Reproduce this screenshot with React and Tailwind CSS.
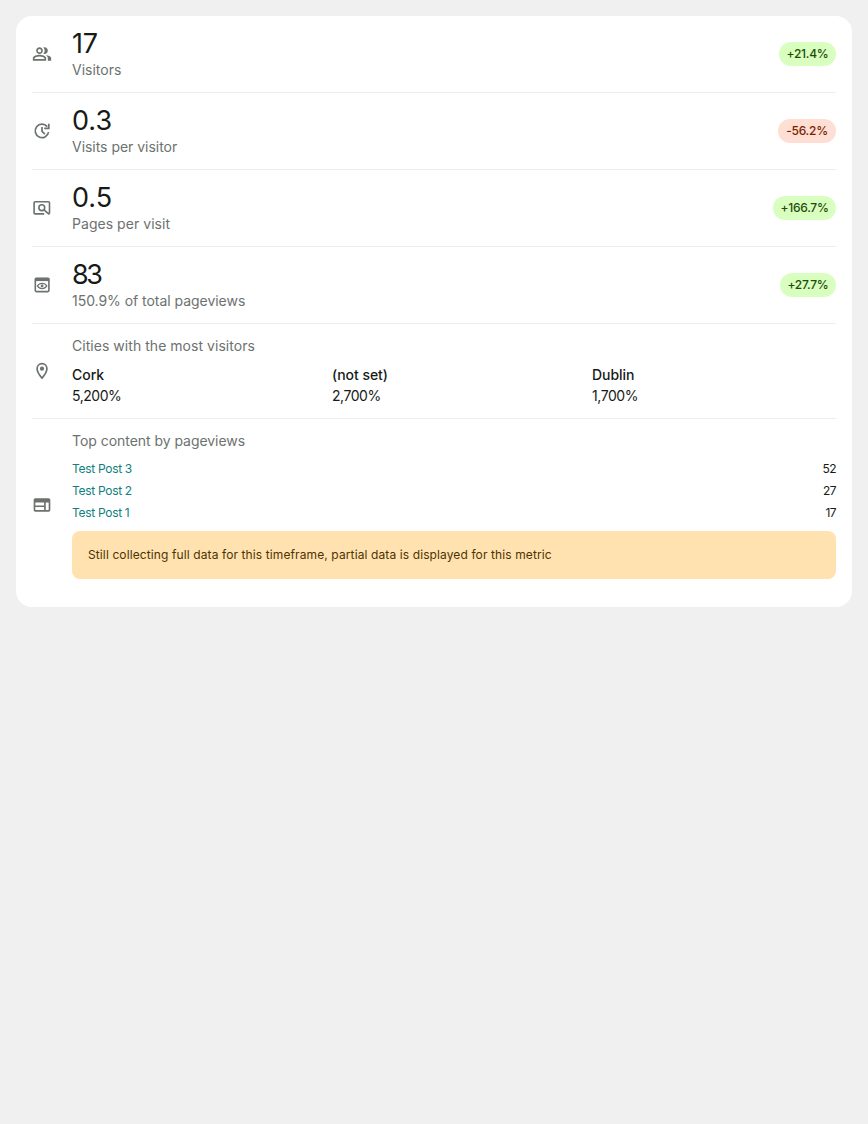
import { MdOutlinePeopleAlt, MdOutlineWeb } from "react-icons/md";

function VisitsIcon({ className }) {
  return (
    <svg viewBox="0 0 20 20" fill="none" stroke="currentColor" strokeWidth="1.7" className={className}>
      <path d="M16.6 11.2A6.75 6.75 0 1 1 15.2 5.6" />
      <path d="M16.8 2.8v4.6h-4.6" />
      <path d="M10 6.1v4.2l2.9 2.9" />
    </svg>
  );
}

function PageSearchIcon({ className }) {
  return (
    <svg viewBox="0 0 20 20" fill="none" stroke="currentColor" strokeWidth="1.6" className={className}>
      <path d="M12.2 15.9H3.1a1 1 0 0 1-1-1V4.8a1 1 0 0 1 1-1h13.4a1 1 0 0 1 1 1v10.1a1 1 0 0 1-.9 1L12 11.9" />
      <circle cx="9.8" cy="9.7" r="2.9" />
    </svg>
  );
}

function PreviewIcon({ className }) {
  return (
    <svg viewBox="0 0 20 20" fill="none" stroke="currentColor" className={className}>
      <rect x="3.3" y="3.3" width="13.6" height="13.3" rx="1" strokeWidth="1.6" />
      <path d="M3 4.5h14.2" strokeWidth="3.2" />
      <path d="M5.4 10.9c2.1-3.5 7.3-3.5 9.4 0-2.1 3.5-7.3 3.5-9.4 0Z" strokeWidth="1.2" />
      <circle cx="10.1" cy="10.9" r="1.35" fill="currentColor" stroke="none" />
    </svg>
  );
}

function PinIcon({ className }) {
  return (
    <svg viewBox="0 0 20 20" fill="none" stroke="currentColor" strokeWidth="1.7" className={className}>
      <path d="M10 17.1C6.6 13.4 5.1 10.4 5.1 7.6a4.9 5 0 0 1 9.8 0c0 2.8-1.5 5.8-4.9 9.5Z" />
      <circle cx="10" cy="7.7" r="2.1" fill="currentColor" stroke="none" />
    </svg>
  );
}

const metrics = [
  { Icon: MdOutlinePeopleAlt, value: "17", label: "Visitors", change: "+21.4%", up: true, badge: "w-[57px]", num: "tracking-[-0.3px]", text: "tracking-[0px]" },
  { Icon: VisitsIcon, value: "0.3", label: "Visits per visitor", change: "-56.2%", up: false, badge: "w-[58px]", num: "tracking-[0px]", text: "tracking-[-0.03px]" },
  { Icon: PageSearchIcon, value: "0.5", label: "Pages per visit", change: "+166.7%", up: true, badge: "w-[63px]", num: "tracking-[0px]", text: "tracking-[0.04px]" },
  { Icon: PreviewIcon, value: "83", label: "150.9% of total pageviews", change: "+27.7%", up: true, badge: "w-[56px]", num: "tracking-[-2.5px]", text: "tracking-[-0.04px]" },
];

const cities = [
  { name: "Cork", share: "5,200%" },
  { name: "(not set)", share: "2,700%" },
  { name: "Dublin", share: "1,700%" },
];

const posts = [
  { title: "Test Post 3", views: "52" },
  { title: "Test Post 2", views: "27" },
  { title: "Test Post 1", views: "17" },
];

function IconCell({ Icon }) {
  return (
    <div className="flex w-10 shrink-0 items-center">
      <Icon className="size-5 text-[#6c726e]" />
    </div>
  );
}

export default function App() {
  return (
    <div className="min-h-screen bg-[#f0f0f1] p-4 font-['Inter','Roboto',sans-serif] text-[#161b18]">
      <div className="rounded-2xl bg-white px-4 pb-4">
        {metrics.map((m) => (
          <div key={m.label} className="flex h-[77px] border-b border-[#ebeef0]">
            <IconCell Icon={m.Icon} />
            <div className="flex-1 pt-2.5">
              <div className={`text-[27px] leading-9 ${m.num}`}>{m.value}</div>
              <div className={`text-[14px] leading-4 text-[#6c726e] ${m.text}`}>{m.label}</div>
            </div>
            <div
              className={`flex h-6 items-center justify-center self-center rounded-full text-[12px] font-medium tracking-[-0.25px] ${m.badge} ${
                m.up ? "bg-[#d8ffc0] text-[#1f4c04]" : "bg-[#ffded3] text-[#7a1e00]"
              }`}
            >
              {m.change}
            </div>
          </div>
        ))}
        <div className="flex h-[95px] border-b border-[#ebeef0]">
          <IconCell Icon={PinIcon} />
          <div className="flex-1 pt-3">
            <div className="text-[14px] leading-5 tracking-[0.04px] text-[#6c726e]">Cities with the most visitors</div>
            <div className="mt-2 flex">
              {cities.map((c) => (
                <div key={c.name} className="w-[260px] shrink-0 last:w-[244px]">
                  <div className="text-[14px] font-medium leading-[22px] tracking-[-0.04px]">{c.name}</div>
                  <div className="text-[14px] leading-5 tracking-[-0.45px]">{c.share}</div>
                </div>
              ))}
            </div>
          </div>
        </div>
        <div className="flex h-[172px]">
          <IconCell Icon={MdOutlineWeb} />
          <div className="flex-1 pt-3">
            <div className="text-[14px] leading-5 tracking-[-0.04px] text-[#6c726e]">Top content by pageviews</div>
            <div className="mt-[7px]">
              {posts.map((p) => (
                <div key={p.title} className="flex justify-between text-[12px] leading-[22px]">
                  <span className="tracking-[-0.3px] text-[#108080]">{p.title}</span>
                  <span className="tracking-[-0.6px]">{p.views}</span>
                </div>
              ))}
            </div>
            <div className="mt-[7px] flex h-12 items-center rounded-lg bg-[#ffe2b0] px-4 text-[12px] tracking-[0.11px] text-[#4e3300]">
              Still collecting full data for this timeframe, partial data is displayed for this metric
            </div>
          </div>
        </div>
      </div>
    </div>
  );
}
